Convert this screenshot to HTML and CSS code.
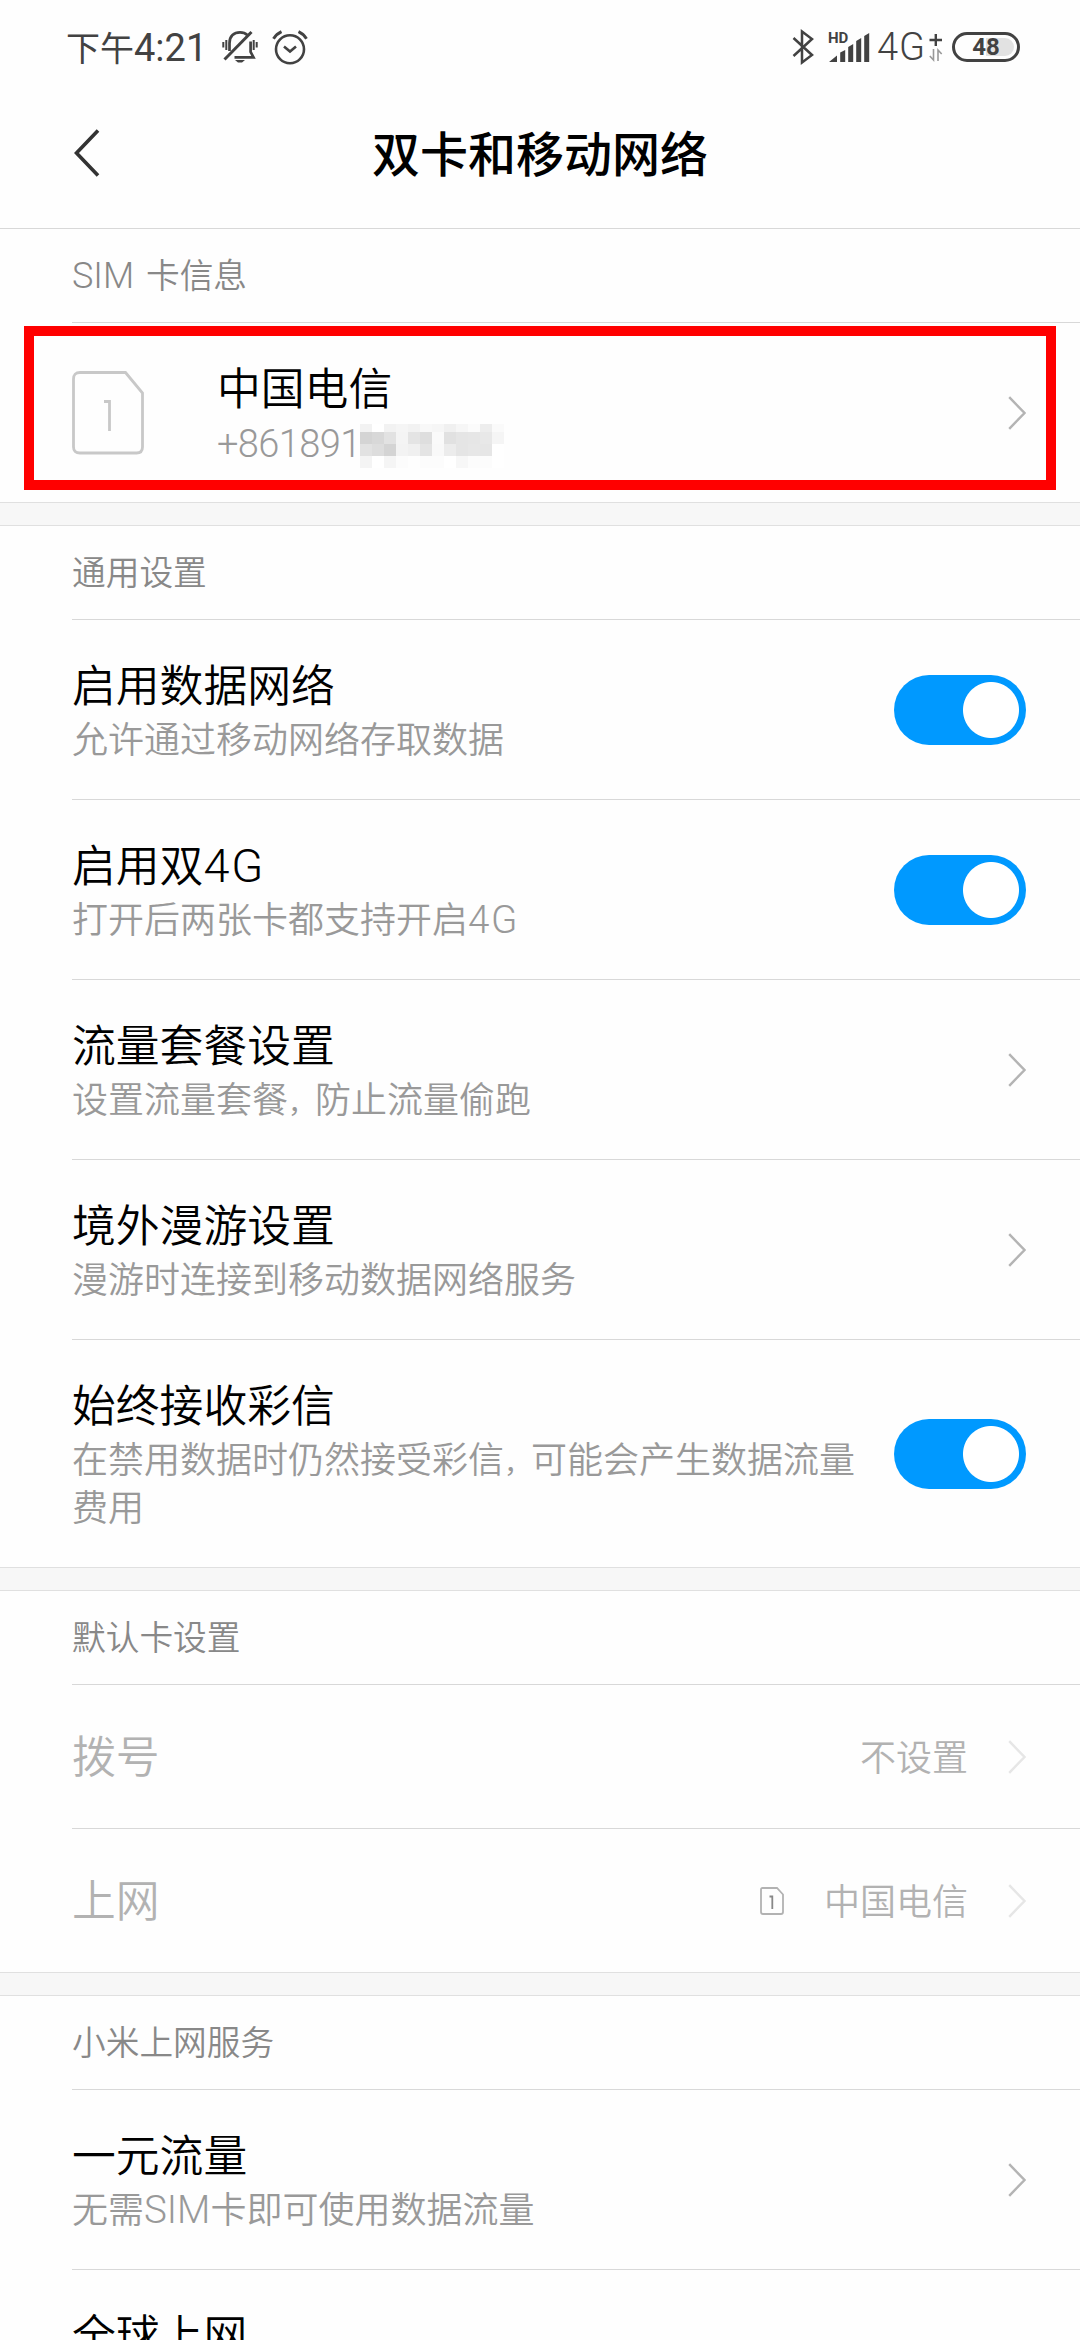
FILE: index.html
```
<!DOCTYPE html>
<html lang="zh-CN">
<head>
    <meta charset="UTF-8">
    <meta name="viewport" content="width=device-width, initial-scale=1.0">
    <title>双卡和移动网络</title>
    <link rel="stylesheet" href="styles.css">
</head>
<body>
    <svg width="0" height="0" class="defs">
        <symbol id="chevron" viewBox="0 0 18 34">
            <path d="M1.2 1.2 L16.5 17 L1.2 32.8" fill="none" stroke="currentColor" stroke-width="2.4"/>
        </symbol>
    </svg>

    <div class="status-bar">
        <div class="status-left">
            <span class="clock">下午<span class="latin">4:21</span></span>
            <svg class="icon-mute" width="36" height="34" viewBox="0 0 36 34" fill="none" stroke="#424242" stroke-width="2.7">
                <path d="M7.5 21 V13 C7.5 6 12 2.3 18 2.3 C21 2.3 23.5 3.2 25.3 5"/>
                <path d="M12.5 27.3 H31.5 L28.6 22 V11.5"/>
                <path d="M29.5 2 L2.5 29.5" stroke-width="3"/>
                <path d="M1.3 12 V17.5 M4.3 10 V20 M31.7 10 V20 M34.7 12 V17.5" stroke-width="2"/>
                <path d="M13 30 H23 L20 32.5 H16 Z" fill="#424242" stroke="none"/>
            </svg>
            <svg class="icon-alarm" width="36" height="35" viewBox="0 0 36 35" fill="none" stroke="#424242">
                <circle cx="18" cy="19.2" r="14" stroke-width="2.6"/>
                <path d="M12 16.5 L18 21.5 L24 16.5" stroke-width="2.6"/>
                <path d="M1.5 8.7 C3.5 5.6 6 3.2 9.5 1.6 M34.5 8.7 C32.5 5.6 30 3.2 26.5 1.6" stroke-width="3"/>
            </svg>
        </div>
        <div class="status-right">
            <svg class="icon-bt" width="22" height="36" viewBox="0 0 22 36" fill="none" stroke="#424242" stroke-width="2.5">
                <path d="M1.5 9 L20 26 L10 33.5 V2.5 L20 10 L1.5 27"/>
            </svg>
            <svg class="icon-signal" width="42" height="34" viewBox="0 0 42 34" fill="#424242">
                <text x="0" y="13" class="hd">HD</text>
                <path d="M1 32 L9 25.5 V32 Z M12.2 22.5 L17.2 20 V32 H12.2 Z M20.2 17 L25.2 14 V32 H20.2 Z M28.2 11 L33.2 8 V32 H28.2 Z M36.2 6 L41.2 3 V32 H36.2 Z"/>
            </svg>
            <span class="network">4G</span>
            <svg class="icon-data" width="14" height="32" viewBox="0 0 14 32" fill="none">
                <path d="M0.5 9 H13 M6.8 3 V15" stroke="#424242" stroke-width="2.4"/>
                <path d="M4.5 18 V29 L0.8 25 M9 30 V19 L12.7 23" stroke="#999" stroke-width="1.6"/>
            </svg>
            <div class="battery"><div class="battery-rest"></div><span>48</span></div>
        </div>
    </div>

    <div class="title-bar">
        <svg class="back" width="26" height="48" viewBox="0 0 26 48">
            <path d="M24 1.5 L2.5 24 L24 46.5" fill="none" stroke="#333" stroke-width="3.6"/>
        </svg>
        <h1>双卡和移动网络</h1>
    </div>

    <div class="section">
        <div class="section-title"><span class="latin sim-label">SIM </span>卡信息</div>
        <div class="row sim-row">
            <svg class="sim-icon" width="72" height="84" viewBox="0 0 72 84" fill="none" stroke="#c8c8c8" stroke-width="2.8">
                <path d="M8 1.5 H53.5 L70.5 22 V76 Q70.5 82 64.5 82 H8 Q1.5 82 1.5 76 V8 Q1.5 1.5 8 1.5 Z"/>
                <path d="M32 30.5 H37.5 V60"/>
            </svg>
            <div class="text">
                <div class="name">中国电信</div>
                <div class="desc phone">+861891<svg class="mosaic" id="mosaic" width="144" height="44"></svg></div>
            </div>
            <svg class="chevron"><use href="#chevron"/></svg>
            <div class="highlight"></div>
        </div>
    </div>

    <div class="section">
        <div class="section-title">通用设置</div>
        <div class="row">
            <div class="text">
                <div class="name">启用数据网络</div>
                <div class="desc">允许通过移动网络存取数据</div>
            </div>
            <div class="switch"></div>
        </div>
        <div class="row">
            <div class="text">
                <div class="name">启用双<span class="latin wide">4G</span></div>
                <div class="desc">打开后两张卡都支持开启<span class="latin wide">4G</span></div>
            </div>
            <div class="switch"></div>
        </div>
        <div class="row">
            <div class="text">
                <div class="name">流量套餐设置</div>
                <div class="desc">设置流量套餐<span class="comma">，</span>防止流量偷跑</div>
            </div>
            <svg class="chevron"><use href="#chevron"/></svg>
        </div>
        <div class="row">
            <div class="text">
                <div class="name">境外漫游设置</div>
                <div class="desc">漫游时连接到移动数据网络服务</div>
            </div>
            <svg class="chevron"><use href="#chevron"/></svg>
        </div>
        <div class="row tall">
            <div class="text">
                <div class="name">始终接收彩信</div>
                <div class="desc">在禁用数据时仍然接受彩信<span class="comma">，</span>可能会产生数据流量费用</div>
            </div>
            <div class="switch"></div>
        </div>
    </div>

    <div class="section">
        <div class="section-title">默认卡设置</div>
        <div class="row short disabled">
            <div class="text"><div class="name">拨号</div></div>
            <div class="value">不设置</div>
            <svg class="chevron"><use href="#chevron"/></svg>
        </div>
        <div class="row short disabled">
            <div class="text"><div class="name">上网</div></div>
            <svg class="sim-small" width="24" height="28" viewBox="0 0 24 28" fill="none">
                <path d="M2.5 1 H17 L23 7.5 V25 Q23 27 21 27 H3 Q1 27 1 25 V2.5 Q1 1 2.5 1 Z" stroke="#b2b2b2" stroke-width="1.8"/>
                <path d="M9.5 9.5 H12.3 V22" stroke="#888" stroke-width="1.8"/>
            </svg>
            <div class="value">中国电信</div>
            <svg class="chevron"><use href="#chevron"/></svg>
        </div>
    </div>

    <div class="section">
        <div class="section-title">小米上网服务</div>
        <div class="row">
            <div class="text">
                <div class="name">一元流量</div>
                <div class="desc">无需<span class="latin">SIM</span>卡即可使用数据流量</div>
            </div>
            <svg class="chevron"><use href="#chevron"/></svg>
        </div>
        <div class="row">
            <div class="text">
                <div class="name">全球上网</div>
                <div class="desc">&nbsp;</div>
            </div>
        </div>
    </div>

    <script>
        // grey level of each 12px block, row by row
        const blocks = [
            [242, 255, 242, 245, 242, 248, 246, 240, 246, 251, 237, 250],
            [212, 216, 226, 244, 228, 222, 250, 225, 229, 230, 232, 245],
            [226, 221, 212, 243, 240, 228, 249, 236, 229, 231, 230, 255],
            [244, 255, 245, 252, 254, 252, 252, 255, 247, 252, 252, 255]
        ];
        const tops = [0, 8, 20, 32];
        const heights = [8, 12, 12, 12];
        document.getElementById("mosaic").innerHTML = blocks
            .map((line, r) => line
                .map((v, c) => `<rect x="${c * 12}" y="${tops[r]}" width="12" height="${heights[r]}" fill="rgb(${v},${v},${v})"/>`)
                .join(""))
            .join("");
    </script>
</body>
</html>
```
FILE: styles.css
```
body {
    margin: 0;
    width: 1080px;
    height: 2340px;
    overflow: hidden;
    background: #fefefe;
    font-family: "Noto Sans CJK SC", sans-serif;
    font-weight: 350;
    color: #000;
}

.defs {
    position: absolute;
}

.latin {
    font-family: Roboto, sans-serif;
    font-weight: 300;
    font-size: 1.07em;
    line-height: 0;
}

.wide {
    letter-spacing: 0.04em;
}

.sim-label {
    word-spacing: 3px;
}

/* status bar */
.status-bar {
    height: 94px;
    box-sizing: border-box;
    padding: 0 60px 0 66px;
    display: flex;
    justify-content: space-between;
    color: #424242;
}

.status-left,
.status-right {
    display: flex;
    align-items: center;
}

.clock {
    font-size: 34px;
    font-weight: 400;
    line-height: 92px;
    width: 140px;
    white-space: nowrap;
}

.clock .latin {
    font-size: 38px;
    font-weight: 400;
}

.icon-mute {
    margin: 0 0 0 16px;
}

.icon-alarm {
    margin-left: 14px;
}

.icon-bt {
    margin-right: 14px;
}

.icon-signal {
    overflow: visible;
}

.hd {
    font: bold 15px Roboto, sans-serif;
}

.network {
    font: 300 38px/96px Roboto, sans-serif;
    letter-spacing: 1px;
    margin-left: 7px;
    width: 50px;
}

.icon-data {
    margin: 0 9px 0 2px;
}

.battery {
    position: relative;
    width: 68px;
    height: 30px;
    box-sizing: border-box;
    border: 3px solid #424242;
    border-radius: 15px;
    text-align: center;
    font: bold 24px/24px Roboto, sans-serif;
}

.battery span {
    position: relative;
}

.battery-rest {
    position: absolute;
    right: 3px;
    top: 3px;
    width: 28px;
    height: 18px;
    background: #e2e2e2;
    border-radius: 0 9px 9px 0;
}

/* title bar */
.title-bar {
    height: 134px;
    border-bottom: 1px solid #d8d8d8;
    display: grid;
    grid-template-columns: 180px 1fr 180px;
}

.back {
    margin: 35px 0 0 74px;
}

h1 {
    margin: 0;
    font-size: 48px;
    font-weight: 500;
    line-height: 114px;
    text-align: center;
}

/* sections */
.section + .section {
    border-top: 24px solid #f7f7f7;
    position: relative;
}

.section + .section::before {
    content: "";
    position: absolute;
    top: -24px;
    left: 0;
    right: 0;
    height: 22px;
    border-top: 1px solid #e0e0e0;
    border-bottom: 1px solid #e0e0e0;
}

.section-title {
    margin-left: 72px;
    height: 93px;
    border-bottom: 1px solid #d8d8d8;
    font-size: 33.7px;
    line-height: 90px;
    color: #888;
}

.row {
    margin-left: 72px;
    padding-right: 54px;
    height: 179px;
    border-bottom: 1px solid #d8d8d8;
    display: flex;
    align-items: center;
}

.row:last-child {
    border-bottom: none;
}

.row.tall {
    height: 227px;
}

.row.short {
    height: 143px;
}

.text {
    flex: 1;
    padding-bottom: 5px;
}

.name {
    font-size: 43.8px;
    line-height: 60px;
}

.desc {
    font-size: 36px;
    line-height: 48px;
    color: #999;
}

/* narrow full-width comma */
.comma {
    font-size: 27px;
    font-weight: 400;
    line-height: 0;
}

.switch {
    flex: none;
    width: 132px;
    height: 70px;
    margin-left: 26px;
    border-radius: 35px;
    background: radial-gradient(circle at 97px 35px, #fff 27.5px, #0099ff 28.5px);
}

.chevron {
    width: 18px;
    height: 34px;
    color: #b4b4b4;
}

/* sim card row */
.sim-row {
    position: relative;
}

.sim-icon {
    margin-right: 73px;
}

.phone {
    position: relative;
    top: 4px;
    font-family: Roboto, sans-serif;
    font-weight: 300;
    font-size: 38px;
    letter-spacing: -0.6px;
}

.mosaic {
    position: absolute;
    left: 143px;
    top: 4px;
}

.highlight {
    position: absolute;
    left: -48px;
    top: 3px;
    width: 1012px;
    height: 144px;
    border: 10px solid #ff0000;
}

/* default card rows */
.disabled {
    color: #b2b2b2;
}

.disabled .chevron {
    color: #e6e6e6;
    margin-left: 40px;
}

.value {
    font-size: 36px;
    padding-bottom: 4px;
}

.sim-small {
    margin-right: 40px;
}
```
